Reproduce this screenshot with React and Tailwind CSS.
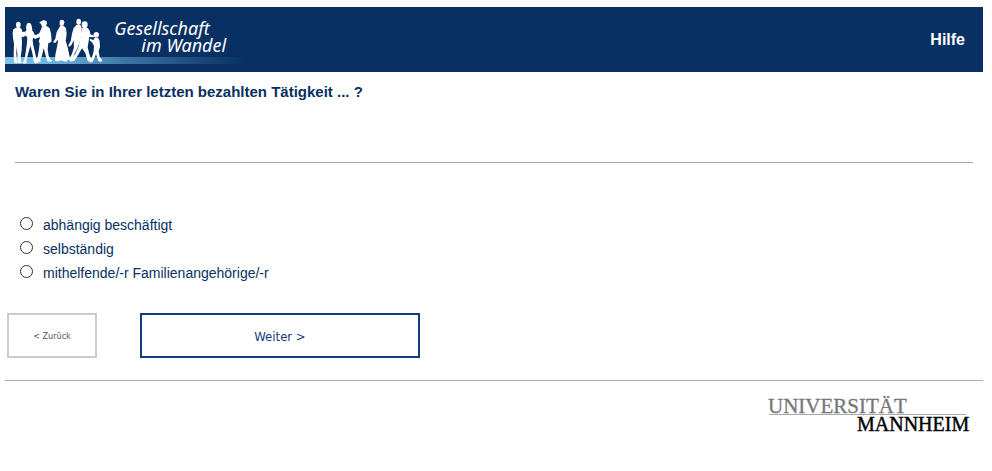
import React from "react";

const options = [
  { value: "employed", label: "abhängig beschäftigt" },
  { value: "self", label: "selbständig" },
  { value: "family", label: "mithelfende/-r Familienangehörige/-r" },
];

function SocietyLogo() {
  return (
    <svg
      className="block h-[65px] w-[245px]"
      viewBox="15 21 735 195"
      role="img"
      aria-label="Gesellschaft im Wandel"
    >
      <defs>
        <linearGradient id="band" x1="0" x2="1" y1="0" y2="0">
          <stop offset="0" stopColor="#7ec4ea" />
          <stop offset="0.2" stopColor="#6db2dc" />
          <stop offset="0.5" stopColor="#3f75a5" />
          <stop offset="0.8" stopColor="#1a487b" />
          <stop offset="1" stopColor="#083063" />
        </linearGradient>
      </defs>
      <rect x="15" y="171" width="725" height="21" fill="url(#band)" />
      <g fill="#fff">
        {/* standing man */}
        <ellipse cx="55" cy="74" rx="7" ry="9" />
        <path d="M51 82h8l6 6 4 14 8-2 1 7-11 5-2-3 1 17-1 24-3 21 1 13 4 4-10 2-4-3-1-27-2-20-1 22 2 20 2 7-7 1-4-4-1-24 1-30-3-18-1-15 2-11z" />
        {/* woman facing him */}
        <path d="M79 77q1-9 8-9 7 1 8 10l2 12-16 1-3-5z" />
        <path d="M80 90l15-1 6 8 4 10 12-5 3 5-13 10-8-4-1 9 2 14 6 25 4 22 5 5-10 2-4-6-4-25-6-22-6 23-6 21 1 8-9 2-2-4 5-11 4-26 3-22 1-14-5-9-12-3-1-6 11-1z" />
        {/* man in a cap */}
        <path d="M121 65l10-5 8 3 2 7-3 8-6 4-7-3-2-8-5-2z" />
        <path d="M127 79l13-1 9 7 4 16 2 23-5 4-5 1-2 19 3 20 6 11 5 2-6 4-9-1-4-14-7-25-6 25-5 11 3 5-12 1-5-5 7-12 4-22 2-20-3-1 4-16-7 3-11-3-1-6 9-1 8-4z" />
        {/* woman in a long skirt */}
        <path d="M179 66q0-7 7-7 7 1 7 8l-2 7-5 5-7-4z" />
        <path d="M181 77l10 0 7 8 2 17-3 20 6 20 5 24 3 12-8 2-4 5-9-1-7-3-8 3-10-1 1-18 5-25 3-17-1-4-7 10-7-2 7-11 4-20z" />
        {/* walking couple */}
        <ellipse cx="236" cy="65" rx="7" ry="9" />
        <ellipse cx="254" cy="74" rx="9" ry="10" />
        <path d="M230 74h11l4 9-1 18-4 21-6 18-9 18-7 17 3 6-12 2-2-5 9-17 6-19-1-21-7 15-7 4-2-4 7-12 4-23 5-17z" />
        <path d="M246 84l16-1 6 7 4 14 10 2-1 6-13-1-3 18-2 13 5 20 5 14 7 6-8 4-9-3-7-24-10-14-10 17-13 20-10 3-2-5 14-17 11-24 4-23z" />
        {/* child */}
        <ellipse cx="289" cy="104" rx="8" ry="8" />
        <path d="M285 112l9 1 5 10 1 18-4 12 3 18 8 10-4 5-8-3-7-20-6 14-5 8-6 3-2-5 8-14 4-16 1-15-5-10-9-8 4-4 8 5z" />
      </g>
      <g
        fill="#fff"
        fontFamily="'Noto Sans', 'Open Sans', sans-serif"
        fontStyle="italic"
        fontSize="54"
      >
        <text x="343" y="104">Gesellschaft</text>
        <text x="424" y="155">im Wandel</text>
      </g>
    </svg>
  );
}

function UniversityLogo() {
  return (
    <svg
      className="block h-[44px] w-[204px]"
      viewBox="0 0 204 44"
      role="img"
      aria-label="Universität Mannheim"
      fontFamily="'Liberation Serif', serif"
    >
      <path d="M2 23.500H199" stroke="#aaa" strokeWidth="1" />
      <text x="1" y="22" fontSize="21" fill="#777" stroke="#777" strokeWidth=".3">UNIVERSITÄT</text>
      <text x="90" y="40" fontSize="20" fill="#000" stroke="#000" strokeWidth=".4">MANNHEIM</text>
    </svg>
  );
}

export default function App() {
  return (
    <div className="min-h-screen bg-white pt-[7px] pr-[9px] pl-[5px] font-['Liberation_Sans',Arial,sans-serif] text-[#083063]">
      <header className="flex items-center justify-between bg-[#083063]">
        <SocietyLogo />
        <a href="#hilfe" className="mr-[18px] text-base font-bold text-white">
          Hilfe
        </a>
      </header>

      <form onSubmit={(e) => e.preventDefault()}>
        <fieldset>
          <legend className="px-[10px] pt-[10px] text-[15px] leading-5 font-bold">
            Waren Sie in Ihrer letzten bezahlten Tätigkeit ... ?
          </legend>
          <hr className="mx-[10px] mt-[60px] border-[#aaa]" />
          <div className="mt-[50px] flex flex-col pl-[15px]">
            {options.map((o) => (
              <label key={o.value} className="flex h-6 items-center gap-[10px] text-sm">
                <input
                  type="radio"
                  name="taetigkeit"
                  value={o.value}
                  className="mb-[3px] size-[13px] appearance-none rounded-full border border-[#333] bg-white checked:border-4"
                />
                {o.label}
              </label>
            ))}
          </div>
        </fieldset>
        <div className="mt-7 flex gap-[43px] pl-[2px] font-['DejaVu_Sans_Condensed','DejaVu_Sans',sans-serif]">
          <button type="button" className="h-[45px] w-[90px] border-2 border-[#ccc] pt-[2px] text-[9px] text-[#555]">
            &lt; Zurück
          </button>
          <button type="submit" className="h-[45px] w-[280px] border-2 border-[#193a7a] pt-[2px] text-[13px] text-[#193a7a]">
            Weiter &gt;
          </button>
        </div>
      </form>

      <footer className="mt-[22px] flex justify-end border-t border-[#aaa] pt-[10px] pr-[12px]">
        <UniversityLogo />
      </footer>
    </div>
  );
}
